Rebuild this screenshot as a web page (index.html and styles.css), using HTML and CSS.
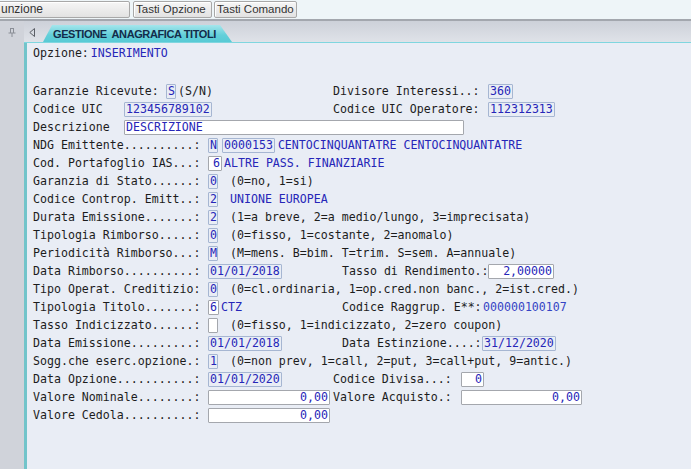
FILE: index.html
```
<!DOCTYPE html>
<html lang="it">
<head>
<meta charset="utf-8">
<title>Gestione Anagrafica Titoli</title>
<link rel="stylesheet" href="styles.css">
</head>
<body>
<div class="app">
  <div class="topbar">
    <div class="tbtn first">unzione</div>
    <div class="tbtn w-opz">Tasti Opzione</div>
    <div class="tbtn w-cmd">Tasti Comando</div>
  </div>
  <div class="main">
    <div class="side">
      <svg class="pin" width="8" height="9" viewBox="0 0 8 9"><path d="M2 0.5h4M2.5 0.5v4.5M5.5 0.5v4.5M0.5 5h7M4 5v4" stroke="#8a8e96" stroke-width="1" fill="none"/></svg>
    </div>
    <div class="pane">
      <div class="tabbar">
        <svg class="arrow" width="6" height="9" viewBox="0 0 6 9"><path d="M5.5 0.5L0.8 4.5L5.5 8.5Z" stroke="#5a5e66" stroke-width="1" fill="none"/></svg>
        <div class="tab">GESTIONE&nbsp; ANAGRAFICA TITOLI</div>
      </div>
      <div class="form">
        <div class="row"><span class="lbl">Opzione:</span><span class="val opz">INSERIMENTO</span></div>
        <div class="row gap-top">
          <div class="half"><span class="lbl l-gar">Garanzie Ricevute:</span><span class="box b-1">S</span><span class="txt ml2">(S/N)</span></div>
          <div class="half-r"><span class="lbl r-155">Divisore Interessi..:</span><span class="box">360</span></div>
        </div>
        <div class="row">
          <div class="half"><span class="lbl l-uic">Codice UIC</span><span class="box">123456789102</span></div>
          <div class="half-r"><span class="lbl r-155">Codice UIC Operatore:</span><span class="box">112312313</span></div>
        </div>
        <div class="row"><span class="lbl l-uic">Descrizione</span><span class="box white b-descr">DESCRIZIONE</span></div>
        <div class="row"><span class="lbl l-24">NDG Emittente..........:</span><span class="box b-1">N</span><span class="box ml4">0000153</span><span class="val ml3">CENTOCINQUANTATRE CENTOCINQUANTATRE</span></div>
        <div class="row"><span class="lbl l-24">Cod. Portafoglio IAS...:</span><span class="box num b-14">6</span><span class="val ml2">ALTRE PASS. FINANZIARIE</span></div>
        <div class="row"><span class="lbl l-24">Garanzia di Stato......:</span><span class="box b-1">0</span><span class="txt desc">(0=no, 1=si)</span></div>
        <div class="row"><span class="lbl l-24">Codice Controp. Emitt..:</span><span class="box b-1">2</span><span class="val desc">UNIONE EUROPEA</span></div>
        <div class="row"><span class="lbl l-24">Durata Emissione.......:</span><span class="box b-1">2</span><span class="txt desc">(1=a breve, 2=a medio/lungo, 3=imprecisata)</span></div>
        <div class="row"><span class="lbl l-24">Tipologia Rimborso.....:</span><span class="box b-1">0</span><span class="txt desc">(0=fisso, 1=costante, 2=anomalo)</span></div>
        <div class="row"><span class="lbl l-24">Periodicità Rimborso...:</span><span class="box b-1">M</span><span class="txt desc">(M=mens. B=bim. T=trim. S=sem. A=annuale)</span></div>
        <div class="row">
          <div class="half"><span class="lbl l-24">Data Rimborso..........:</span><span class="box">01/01/2018</span></div>
          <div class="half-r"><span class="lbl r-146 in9">Tasso di Rendimento.:</span><span class="box num b-66">2,00000</span></div>
        </div>
        <div class="row"><span class="lbl l-24">Tipo Operat. Creditizio:</span><span class="box b-1">0</span><span class="txt desc">(0=cl.ordinaria, 1=op.cred.non banc., 2=ist.cred.)</span></div>
        <div class="row">
          <div class="half"><span class="lbl l-24">Tipologia Titolo.......:</span><span class="box num b-11">6</span><span class="val ml2">CTZ</span></div>
          <div class="half-r"><span class="lbl r-141 in9">Codice Raggrup. E**:</span><span class="val lite">000000100107</span></div>
        </div>
        <div class="row"><span class="lbl l-24">Tasso Indicizzato......:</span><span class="box num b-10"></span><span class="txt desc">(0=fisso, 1=indicizzato, 2=zero coupon)</span></div>
        <div class="row">
          <div class="half"><span class="lbl l-24">Data Emissione.........:</span><span class="box">01/01/2018</span></div>
          <div class="half-r"><span class="lbl r-140 in9">Data Estinzione....:</span><span class="box">31/12/2020</span></div>
        </div>
        <div class="row"><span class="lbl l-24">Sogg.che eserc.opzione.:</span><span class="box b-1">1</span><span class="txt desc">(0=non prev, 1=call, 2=put, 3=call+put, 9=antic.)</span></div>
        <div class="row">
          <div class="half"><span class="lbl l-24">Data Opzione...........:</span><span class="box">01/01/2020</span></div>
          <div class="half-r"><span class="lbl r-128">Codice Divisa...:</span><span class="box num b-23">0</span></div>
        </div>
        <div class="row">
          <div class="half"><span class="lbl l-24">Valore Nominale........:</span><span class="box num b-122">0,00</span></div>
          <div class="half-r"><span class="lbl r-128">Valore Acquisto.:</span><span class="box num b-121">0,00</span></div>
        </div>
        <div class="row"><span class="lbl l-24">Valore Cedola..........:</span><span class="box num b-122">0,00</span></div>
      </div>
    </div>
  </div>
</div>
</body>
</html>
```

FILE: styles.css
```
* { box-sizing: border-box; }
html, body { margin: 0; padding: 0; }
body { width: 691px; height: 469px; overflow: hidden; background: #e9edf5; }

.app { width: 691px; height: 469px; display: flex; flex-direction: column; }

.topbar {
  height: 21px; flex: none;
  background: #eef5f8;
  display: flex; align-items: flex-start; gap: 2px;
  padding-top: 1px;
  border-bottom: 2px solid #a3a7ae;
}
.tbtn {
  height: 17px; flex: none;
  border: 1px solid #a8a8a8; border-radius: 2px;
  background: linear-gradient(#f6f6f6, #e2e2e2);
  box-shadow: inset 1px 1px 0 #ffffff;
  font-family: "Liberation Sans", Arial, sans-serif; font-size: 11.5px; color: #333;
  line-height: 15px; padding: 0 2px; white-space: nowrap; overflow: hidden;
}
.tbtn.first { width: 133px; margin-left: -3px; margin-right: 1px; padding-left: 3px; font-size: 12px; }
.w-opz { width: 79px; }
.w-cmd { width: 83px; }

.main { flex: 1; display: flex; min-height: 0; }
.side { width: 24px; flex: none; background: #d0d3da; }
.pin { display: block; margin: 7px 0 0 8px; }

.pane { flex: 1; display: flex; flex-direction: column; min-width: 0; }
.tabbar {
  height: 22px; flex: none;
  background: linear-gradient(#cdd1d9, #dfe2e8);
  border-bottom: 1px solid #7fd6df;
  display: flex; align-items: flex-end;
  padding-left: 5px;
}
.arrow { display: block; margin-bottom: 5px; }
.tab {
  margin-left: 8px;
  height: 17px; width: 189px;
  padding-left: 10px;
  background: linear-gradient(#a5e6ec, #62cfd9 60%, #58cad5);
  clip-path: polygon(9px 0, 177px 0, 100% 100%, 0 100%);
  font-family: "Liberation Sans", Arial, sans-serif; font-weight: bold; font-size: 11px;
  letter-spacing: -0.4px;
  color: #132c4a; line-height: 18px; white-space: nowrap;
}

.form {
  flex: 1;
  background: #e9edf5;
  border-left: 3px solid #72c4ca;
  padding: 1px 0 0 6px;
  font-family: "DejaVu Sans Mono", "Liberation Mono", monospace;
  font-size: 11.6px; color: #1c1c1c;
}
.row { height: 18px; display: flex; align-items: center; white-space: pre; }
.row.gap-top { margin-top: 20px; }
.half { width: 300px; flex: none; display: flex; align-items: center; }
.half-r { display: flex; align-items: center; }
.lbl { flex: none; }
.l-24 { width: 175px; }
.l-gar { width: 133px; }
.l-uic { width: 91px; }
.r-155 { width: 155px; }
.r-128 { width: 128px; }
.r-146 { width: 146px; }
.r-141 { width: 141px; }
.r-140 { width: 140px; }
.in9 { margin-left: 9px; }

.val { color: #2626b8; }
.val.lite { color: #3544c4; }
.opz { margin-left: 2px; }
.ml2 { margin-left: 2px; }
.ml3 { margin-left: 3px; }
.ml4 { margin-left: 4px; }
.desc { margin-left: 12px; }

.box {
  flex: none; height: 15px;
  border: 1px solid #a6b6d2; border-radius: 1px;
  padding: 0 1px; line-height: 13px;
  color: #2626b8; background: transparent;
}
.box.b-1 { width: 10px; padding: 0 0 0 1px; overflow: visible; }
.box.white, .box.num { background: #ffffff; border-color: #a4a7ad; }
.box.num { text-align: right; }
.b-descr { width: 340px; }
.b-14 { width: 14px; }
.b-11 { width: 11px; }
.b-10 { width: 10px; }
.b-66 { width: 66px; }
.b-23 { width: 23px; }
.b-122 { width: 122px; }
.b-121 { width: 121px; }
```
